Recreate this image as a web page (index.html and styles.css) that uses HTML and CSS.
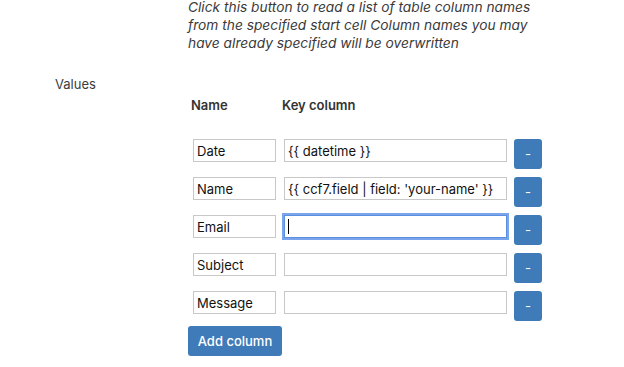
FILE: index.html
```html
<!DOCTYPE html>
<html lang="en">
<head>
    <meta charset="UTF-8">
    <title>Column settings</title>
    <link rel="stylesheet" href="styles.css">
</head>
<body>
    <div class="settings">
        <div class="field-row">
            <div class="field-label"></div>
            <div class="field-body">
                <p class="help">Click this button to read a list of table column names from the specified start cell Column names you may have already specified will be overwritten</p>
            </div>
        </div>

        <div class="field-row values">
            <div class="field-label">Values</div>
            <div class="field-body">
                <div class="col-head">
                    <span class="head-name">Name</span>
                    <span class="head-key">Key column</span>
                </div>

                <div class="col-rows">
                    <div class="col-row">
                        <input type="text" class="in-name" value="Date">
                        <input type="text" class="in-key" value="{{ datetime }}">
                        <button class="btn btn-remove">-</button>
                    </div>
                    <div class="col-row">
                        <input type="text" class="in-name" value="Name">
                        <input type="text" class="in-key" value="{{ ccf7.field | field: 'your-name' }}">
                        <button class="btn btn-remove">-</button>
                    </div>
                    <div class="col-row">
                        <input type="text" class="in-name" value="Email">
                        <div class="in-key focused"><span class="caret"></span></div>
                        <button class="btn btn-remove">-</button>
                    </div>
                    <div class="col-row">
                        <input type="text" class="in-name" value="Subject">
                        <input type="text" class="in-key" value="">
                        <button class="btn btn-remove">-</button>
                    </div>
                    <div class="col-row">
                        <input type="text" class="in-name" value="Message">
                        <input type="text" class="in-key" value="">
                        <button class="btn btn-remove">-</button>
                    </div>
                </div>

                <button class="btn btn-add">Add column</button>
            </div>
        </div>
    </div>
</body>
</html>
```

FILE: styles.css
```css
* {
    margin: 0;
    padding: 0;
    box-sizing: border-box;
}

body {
    font-family: 'Inter', 'Helvetica', sans-serif;
    background: white;
    color: #333;
}

.settings {
    width: 624px;
}

.field-row {
    display: flex;
}

.field-label {
    width: 188px;
    padding-left: 55px;
    font-size: 13px;
    color: #3c3c3c;
}

.field-body {
    flex: 1;
}

.help {
    max-width: 350px;
    margin-top: -2px;
    font-size: 13.75px;
    line-height: 18px;
    font-style: italic;
    color: #3a3a3a;
}

.values {
    margin-top: 22px;
}

.values .field-label {
    line-height: 20px;
}

.col-head {
    display: flex;
    padding-top: 22px;
    font-size: 13px;
    font-weight: 600;
    color: #333;
    line-height: 18px;
}

.head-name {
    width: 94px;
    padding-left: 3px;
}

.col-rows {
    padding-top: 25px;
    padding-left: 5px;
}

.col-row {
    display: flex;
    align-items: flex-start;
    margin-bottom: 8px;
}

input[type="text"], .in-key {
    height: 23px;
    border: 1px solid #c8c8c8;
    padding: 0 3px;
    font-family: 'Inter', 'Helvetica', sans-serif;
    font-size: 13px;
    color: #111;
    background: white;
}

.in-name {
    width: 83px;
    margin-right: 8px;
}

.in-key {
    width: 223px;
    margin-right: 7px;
}

.focused {
    display: flex;
    align-items: center;
    border-color: #5b8fe0;
    box-shadow: 0 0 0 2px #7aa5ec;
}

.caret {
    display: block;
    width: 1px;
    height: 15px;
    background: #000;
}

.btn {
    background: #3f7bb8;
    color: white;
    border: none;
    border-radius: 3px;
    font-family: 'Inter', 'Helvetica', sans-serif;
    cursor: pointer;
}

.btn-remove {
    width: 28px;
    height: 30px;
    font-size: 13px;
}

.btn-add {
    display: block;
    width: 94px;
    height: 30px;
    margin-top: -3px;
    font-size: 13px;
    font-weight: 500;
}
```
